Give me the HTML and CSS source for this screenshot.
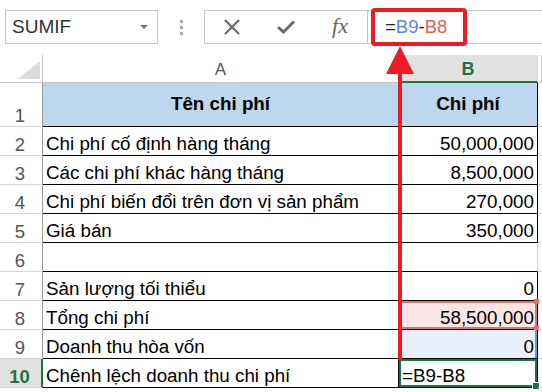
FILE: index.html
```html
<!DOCTYPE html>
<html lang="vi">
    <head>
        <meta charset="UTF-8" />
        <meta name="viewport" content="width=device-width, initial-scale=1.0" />
        <link rel="stylesheet" href="styles.css">
        <title>SUMIF</title>
    </head>
    <body>
        <div class="toolbar">
            <div class="name-box">
                <span>SUMIF</span>
                <span class="caret"></span>
            </div>
            <div class="grip"><i></i><i></i><i></i></div>
            <div class="formula-bar">
                <div class="fx-buttons">
                    <svg width="18" height="16" viewBox="0 0 18 16">
                        <path d="M2 1 L16 15 M16 1 L2 15" stroke="#6b6b6b" stroke-width="2.2" fill="none" />
                    </svg>
                    <svg width="18" height="14" viewBox="0 0 18 14">
                        <path d="M1 7 L6.5 12 L17 1.5" stroke="#6b6b6b" stroke-width="3" fill="none" />
                    </svg>
                    <span class="fx">fx</span>
                </div>
                <div class="formula-input">
                    <span class="formula-box">=<span class="ref-b9">B9</span>-<span class="ref-b8">B8</span></span>
                </div>
            </div>
        </div>

        <div class="sheet">
            <div class="corner"><span class="corner-tri"></span></div>
            <div class="col-hdr">A</div>
            <div class="col-hdr active">B</div>
            <div class="col-hdr"></div>

            <div class="row-hdr">1</div>
            <div class="c t head">Tên chi phí</div>
            <div class="c t head">Chi phí</div>
            <div class="c"></div>

            <div class="row-hdr">2</div>
            <div class="c t">Chi phí cố định hàng tháng</div>
            <div class="c t num">50,000,000</div>
            <div class="c"></div>

            <div class="row-hdr">3</div>
            <div class="c t">Các chi phí khác hàng tháng</div>
            <div class="c t num">8,500,000</div>
            <div class="c"></div>

            <div class="row-hdr">4</div>
            <div class="c t">Chi phí biến đổi trên đơn vị sản phẩm</div>
            <div class="c t num">270,000</div>
            <div class="c"></div>

            <div class="row-hdr">5</div>
            <div class="c t">Giá bán</div>
            <div class="c t num">350,000</div>
            <div class="c"></div>

            <div class="row-hdr">6</div>
            <div class="c gap"></div>
            <div class="c gap"></div>
            <div class="c"></div>

            <div class="row-hdr">7</div>
            <div class="c t">Sản lượng tối thiểu</div>
            <div class="c t num">0</div>
            <div class="c"></div>

            <div class="row-hdr">8</div>
            <div class="c t">Tổng chi phí</div>
            <div class="c t num ref-red">58,500,000</div>
            <div class="c"></div>

            <div class="row-hdr">9</div>
            <div class="c t">Doanh thu hòa vốn</div>
            <div class="c t num ref-blue">0</div>
            <div class="c"></div>

            <div class="row-hdr current">10</div>
            <div class="c t">Chênh lệch doanh thu chi phí</div>
            <div class="c t selected">=B9-B8</div>
            <div class="c"></div>
        </div>

        <div class="arrow">
            <div class="arrow-head"></div>
            <div class="arrow-shaft"></div>
        </div>
    </body>
</html>
```

FILE: styles.css
```css
* {
    padding: 0;
    margin: 0;
    box-sizing: border-box;
}

body {
    width: 542px;
    height: 392px;
    overflow: hidden;
    background: #fff;
    font-family: "Liberation Sans", Arial, sans-serif;
    color: #000;
    position: relative;
}

/* formula bar */
.toolbar {
    display: flex;
    height: 34px;
    margin-top: 10px;
    padding-left: 5px;
}

.name-box {
    width: 153px;
    border: 1px solid #c6c6c6;
    display: flex;
    align-items: center;
    justify-content: space-between;
    padding: 0 9px 0 6px;
    font-size: 19px;
    color: #333;
}

.caret {
    width: 0;
    height: 0;
    border-left: 4px solid transparent;
    border-right: 4px solid transparent;
    border-top: 4px solid #777;
}

.grip {
    width: 46px;
    display: flex;
    flex-direction: column;
    align-items: center;
    justify-content: center;
    gap: 3px;
}

.grip i {
    display: block;
    width: 3px;
    height: 3px;
    background: #a6a6a6;
}

.formula-bar {
    flex: 1;
    display: flex;
    border: 1px solid #c6c6c6;
    border-right: none;
}

.fx-buttons {
    width: 163px;
    display: grid;
    grid-template-columns: repeat(3, 1fr);
    align-items: center;
    justify-items: center;
    border-right: 1px solid #c6c6c6;
}

.fx {
    font-family: "Liberation Serif", serif;
    font-style: italic;
    font-size: 22px;
    color: #666;
    margin-bottom: 3px;
}

.formula-input {
    flex: 1;
    display: flex;
    align-items: center;
    padding-left: 3px;
}

.formula-box {
    width: 96px;
    height: 38px;
    border: 4px solid #ec1c24;
    border-radius: 4px;
    padding-left: 10px;
    display: flex;
    align-items: center;
    font-size: 18.5px;
    color: #222;
}

.ref-b9 {
    color: #5a87dc;
}

.ref-b8 {
    color: #e06060;
}

/* grid */
.sheet {
    display: grid;
    grid-template-columns: 43px 356px 139px 4px;
    grid-template-rows: 28px 44px repeat(9, 29px);
    margin-top: 11px;
    font-size: 18.8px;
}

.corner {
    border-right: 1px solid #c6c6c6;
    border-bottom: 1px solid #c6c6c6;
    display: flex;
    align-items: flex-end;
    justify-content: flex-end;
    padding: 0 2px 3px 0;
}

.corner-tri {
    width: 0;
    height: 0;
    border-left: 22px solid transparent;
    border-bottom: 18px solid #dcdcdc;
}

.col-hdr {
    border-right: 1px solid #d4d4d4;
    border-bottom: 1px solid #c6c6c6;
    display: flex;
    align-items: center;
    justify-content: center;
    font-size: 17px;
    color: #555;
    padding-top: 2px;
}

.col-hdr.active {
    background: #e1e1e1;
    border-bottom: 2px solid #217346;
    color: #217346;
    font-weight: bold;
    font-size: 18px;
}

.row-hdr {
    border-right: 1px solid #9a9a9a;
    border-bottom: 1px solid #d4d4d4;
    display: flex;
    align-items: flex-end;
    justify-content: center;
    line-height: 20px;
    font-size: 18.5px;
    color: #555;
    padding-right: 2px;
}

.row-hdr.current {
    background: #e1e1e1;
    border-right: 2px solid #217346;
    color: #217346;
    font-weight: bold;
}

.c {
    border-right: 1px solid #d4d4d4;
    border-bottom: 1px solid #d4d4d4;
    display: flex;
    align-items: flex-end;
    line-height: 20px;
    padding: 0 3px 1px;
    white-space: nowrap;
    overflow: hidden;
    position: relative;
}

.t {
    border-right-color: #000;
    border-bottom-color: #000;
}

.gap {
    border-bottom-color: #000;
}

.head {
    background: #bdd7ee;
    font-weight: bold;
    justify-content: center;
    align-items: center;
}

.num {
    justify-content: flex-end;
}

.ref-red {
    background: #fbe6e6;
    box-shadow: inset 0 0 0 2px #e07272;
    overflow: visible;
}

.ref-red::before,
.ref-red::after {
    content: "";
    position: absolute;
    right: -2px;
    width: 5px;
    height: 5px;
    background: #e07272;
}

.ref-red::before {
    top: -2px;
}

.ref-red::after {
    bottom: -2px;
}

.ref-blue {
    background: #eaf0fa;
    box-shadow: inset -2px 0 0 #6b98e0;
}

.selected {
    box-shadow: inset 0 0 0 2px #217346;
    overflow: visible;
}

.selected::after {
    content: "";
    position: absolute;
    right: -3px;
    bottom: -3px;
    width: 6px;
    height: 6px;
    background: #217346;
    border: 1px solid #fff;
}

/* annotation arrow */
.arrow {
    position: absolute;
    left: 386px;
    top: 46px;
    width: 28px;
    display: flex;
    flex-direction: column;
    align-items: center;
}

.arrow-head {
    width: 0;
    height: 0;
    border-left: 14px solid transparent;
    border-right: 14px solid transparent;
    border-bottom: 28px solid #ec1c24;
}

.arrow-shaft {
    width: 4px;
    height: 286px;
    background: #ec1c24;
}
```
